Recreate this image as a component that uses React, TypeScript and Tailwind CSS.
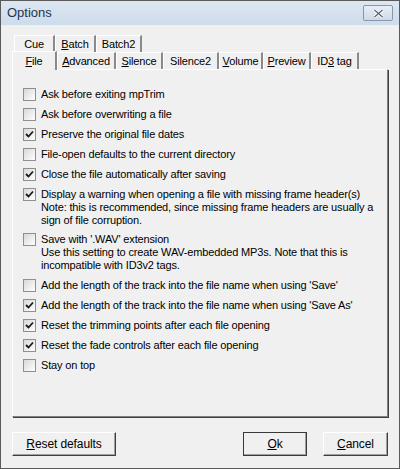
import React from "react";

type Opt = { label: string; checked: boolean; note?: string[]; gap?: string };

const options: Opt[] = [
  { label: "Ask before exiting mpTrim", checked: false },
  { label: "Ask before overwriting a file", checked: false },
  { label: "Preserve the original file dates", checked: true },
  { label: "File-open defaults to the current directory", checked: false },
  { label: "Close the file automatically after saving", checked: true },
  {
    label: "Display a warning when opening a file with missing frame header(s)",
    checked: true,
    note: [
      "Note: this is recommended, since missing frame headers are usually a",
      "sign of file corruption.",
    ],
    gap: "mb-[2px]",
  },
  {
    label: "Save with '.WAV' extension",
    checked: false,
    note: [
      "Use this setting to create WAV-embedded MP3s. Note that this is",
      "incompatible with ID3v2 tags.",
    ],
    gap: "mb-[3px]",
  },
  { label: "Add the length of the track into the file name when using 'Save'", checked: false },
  { label: "Add the length of the track into the file name when using 'Save As'", checked: true },
  { label: "Reset the trimming points after each file opening", checked: true },
  { label: "Reset the fade controls after each file opening", checked: true },
  { label: "Stay on top", checked: false },
];

function Check({ checked }: { checked: boolean }) {
  return (
    <div className="w-[13px] h-[13px] shrink-0 border border-[#8f8f8f] bg-gradient-to-br from-[#d8d8d8] to-white flex items-center justify-center">
      {checked && (
        <svg width="9" height="9" viewBox="0 0 9 9">
          <path d="M1 4 L3.5 6.5 L8 1.5" stroke="#1a1a1a" strokeWidth="1.8" fill="none" />
        </svg>
      )}
    </div>
  );
}

function Tab({ children, w, active }: { children: React.ReactNode; w: string; active?: boolean }) {
  return (
    <div
      className={`${w} flex items-center justify-center whitespace-nowrap border-t border-l border-white border-r-2 border-r-[#8a8a8a] ${
        active ? "h-[19px] -mb-[1px] -ml-[2px] relative z-10 bg-[#f0f0f0] items-start pt-[1px]" : "h-[17px]"
      }`}
    >
      {children}
    </div>
  );
}

function Btn({ children, w, focus }: { children: React.ReactNode; w: string; focus?: boolean }) {
  return (
    <div
      className={`${w} h-[24px] flex items-center justify-center border ${
        focus ? "border-[#3a3a3a]" : "border-t-white border-l-white border-r-[#404040] border-b-[#404040]"
      } shadow-[inset_-1px_-1px_0_#a0a0a0] bg-[#f0f0f0]`}
    >
      {children}
    </div>
  );
}

export default function App() {
  return (
    <div
      className="w-[400px] h-[469px] bg-[#f0f0f0] text-black border border-[#5a5a5a] flex flex-col overflow-hidden"
      style={{ fontFamily: "'Liberation Sans', Arial, sans-serif" }}
    >
      {/* Title bar */}
      <div className="h-[24px] shrink-0 bg-gradient-to-b from-[#dde7f2] to-[#cddbeb] flex items-center justify-between pl-[6px] pr-[6px]">
        <span className="text-[13px] text-[#1e3350]">Options</span>
        <div className="w-[30px] h-[16px] border border-[#8797ab] rounded-[2px] bg-gradient-to-b from-[#e8eef6] to-[#cfd9e6] flex items-center justify-center">
          <svg width="11" height="9" viewBox="0 0 11 9">
            <path d="M1.5 1 L9.5 8 M9.5 1 L1.5 8" stroke="#ffffff" strokeWidth="3" />
            <path d="M1.5 1 L9.5 8 M9.5 1 L1.5 8" stroke="#55606e" strokeWidth="1.2" />
          </svg>
        </div>
      </div>

      <div className="flex-1 flex flex-col px-[11px] pt-[10px] text-[11px] tracking-[-0.15px]">
        {/* Tabs row 1 */}
        <div className="flex pl-[2px] h-[16px]">
          <Tab w="w-[41px]">Cue</Tab>
          <Tab w="w-[41px]">
            <span><u>B</u>atch</span>
          </Tab>
          <Tab w="w-[46px]">Batch2</Tab>
        </div>
        {/* Tabs row 2 */}
        <div className="flex items-end h-[18px] pl-[2px]">
          <Tab w="w-[45px]" active>
            <span><u>F</u>ile</span>
          </Tab>
          <Tab w="w-[59px]">
            <span><u>A</u>dvanced</span>
          </Tab>
          <Tab w="w-[47px]">
            <span><u>S</u>ilence</span>
          </Tab>
          <Tab w="w-[56px]">Silence2</Tab>
          <Tab w="w-[44px]">
            <span><u>V</u>olume</span>
          </Tab>
          <Tab w="w-[48px]">
            <span><u>P</u>review</span>
          </Tab>
          <Tab w="w-[48px]">
            <span>ID<u>3</u> tag</span>
          </Tab>
        </div>

        {/* Panel */}
        <div className="h-[348px] border border-t-white border-l-white border-r-[#808080] border-b-[#808080] shadow-[1px_1px_0_#404040] pl-[10px] pt-[14px] flex flex-col">
          {options.map((o) => (
            <div key={o.label} className={`flex flex-col ${o.gap ?? ""}`}>
              <div className="flex items-center h-[20px] gap-[5px] whitespace-nowrap">
                <Check checked={o.checked} />
                <span>{o.label}</span>
              </div>
              {o.note && (
                <div className="pl-[18px] -mt-[3px] leading-[13px] whitespace-nowrap">
                  {o.note.map((n) => (
                    <div key={n}>{n}</div>
                  ))}
                </div>
              )}
            </div>
          ))}
        </div>

        {/* Buttons */}
        <div className="flex items-center mt-[15px] text-[12px] tracking-[-0.1px]">
          <Btn w="w-[104px]">
            <span><u>R</u>eset defaults</span>
          </Btn>
          <div className="flex-1" />
          <Btn w="w-[64px]" focus>
            <span><u>O</u>k</span>
          </Btn>
          <div className="w-[16px]" />
          <Btn w="w-[65px]">
            <span><u>C</u>ancel</span>
          </Btn>
        </div>
      </div>
    </div>
  );
}
